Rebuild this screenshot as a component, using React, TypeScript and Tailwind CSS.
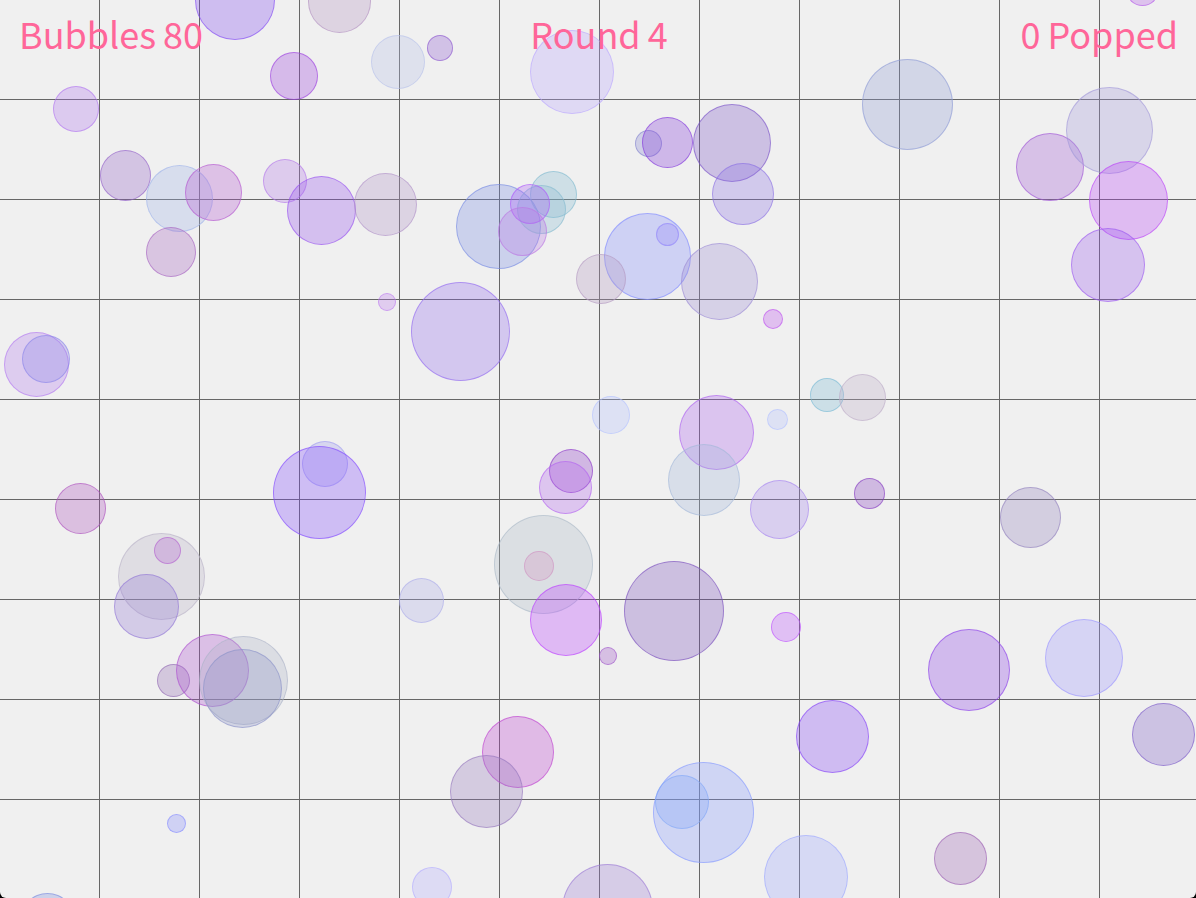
// Bubble field: [centre x, centre y, radius, on-screen tint r, g, b]
type Bubble = [number, number, number, number, number, number];

const BUBBLES: Bubble[] = [
  [235, 0, 39.5, 207, 190, 241],
  [339.5, 1, 31, 222, 212, 226],
  [398, 62, 26.5, 223, 226, 238],
  [440, 48, 12.5, 210, 194, 230],
  [294, 76, 23.5, 215, 187, 235],
  [572, 72, 41.5, 224, 218, 245],
  [76, 109, 22.5, 221, 203, 240],
  [125.5, 175, 25, 212, 197, 228],
  [179.5, 198, 33, 216, 222, 238],
  [213.5, 192, 28, 222, 194, 230],
  [284.5, 181, 21.5, 222, 204, 238],
  [321.5, 210, 34, 213, 192, 240],
  [385.5, 204, 31, 221, 212, 228],
  [498.5, 226, 42, 204, 210, 236],
  [553.5, 194, 23, 207, 224, 230],
  [541, 209, 24, 208, 224, 230],
  [530, 204, 19.5, 220, 195, 243],
  [522, 231, 24, 224, 204, 236],
  [171, 252, 24.5, 218, 198, 226],
  [648.5, 143, 13, 208, 208, 230],
  [667.5, 142, 25, 207, 184, 234],
  [732, 143, 38.5, 205, 193, 228],
  [743, 194, 30.5, 210, 202, 236],
  [907, 104, 45, 211, 215, 232],
  [1050, 167, 33.5, 216, 194, 232],
  [1109, 130, 43, 217, 214, 233],
  [1128.5, 200, 39, 224, 188, 242],
  [1108, 265, 36.5, 215, 195, 240],
  [1142, -11, 16, 222, 195, 238],
  [647, 256, 43, 207, 210, 245],
  [667.5, 234, 11, 212, 208, 243],
  [601, 279, 24.5, 222, 214, 226],
  [719.5, 281, 38, 215, 210, 232],
  [772.5, 319, 9.5, 225, 192, 240],
  [387, 302, 8.5, 225, 205, 240],
  [460, 331, 49, 212, 200, 240],
  [36, 364, 32, 222, 205, 240],
  [45.5, 359, 23.5, 210, 208, 238],
  [611, 415, 18.5, 222, 226, 245],
  [716.5, 432, 37, 220, 197, 240],
  [777, 419, 10, 222, 226, 245],
  [826.5, 395, 16.5, 205, 224, 232],
  [862, 397, 23, 225, 220, 228],
  [325, 464, 22.5, 216, 215, 240],
  [319, 492, 46, 207, 190, 245],
  [570.5, 471, 21.5, 210, 184, 228],
  [565, 487, 26, 222, 198, 240],
  [704, 480, 35.5, 217, 223, 233],
  [779.5, 509, 29, 218, 208, 240],
  [869.5, 493, 15, 208, 186, 226],
  [80, 508, 25, 220, 192, 225],
  [1030.5, 517, 30, 212, 207, 225],
  [161, 576, 43, 224, 222, 228],
  [167.5, 550, 13, 222, 198, 230],
  [146.5, 606, 32, 212, 204, 232],
  [543.5, 564, 49, 220, 224, 228],
  [539, 566, 14.5, 230, 212, 226],
  [566, 620, 35.5, 224, 186, 247],
  [421.5, 600, 22, 220, 220, 238],
  [674, 611, 49.5, 205, 192, 225],
  [785.5, 627, 14.5, 225, 192, 245],
  [608, 656, 8.5, 215, 192, 228],
  [969, 670, 40.5, 210, 187, 238],
  [1084, 658, 38.5, 215, 213, 245],
  [173.5, 680, 16, 212, 200, 222],
  [212.5, 670, 36, 220, 192, 230],
  [243, 680.5, 44, 220, 222, 228],
  [242.5, 688, 39, 210, 212, 228],
  [1163.5, 734, 31, 205, 195, 228],
  [518, 752, 35.5, 225, 187, 230],
  [486.5, 791, 36, 213, 204, 225],
  [832.5, 736, 36, 208, 188, 242],
  [703.5, 812, 50, 208, 214, 245],
  [682, 802, 26.5, 207, 218, 242],
  [176.5, 823, 9, 208, 210, 245],
  [432, 887, 19.5, 222, 220, 245],
  [607.5, 909, 45, 215, 205, 232],
  [806, 877, 41.5, 215, 218, 245],
  [960.5, 858, 26, 215, 197, 222],
  [47, 920, 27, 205, 210, 235],
];

// tint on the #f0f0f0 page back to the source colour at 30% alpha
const base = (v: number) => Math.max(0, Math.round((v - 240 * 0.7) / 0.3));

function BubbleDot({ b }: { b: Bubble }) {
  const [x, y, r, red, green, blue] = b;
  const rgb = `${base(red)}, ${base(green)}, ${base(blue)}`;
  const size = r * 2 + 1;
  return (
    <div
      className="absolute rounded-full border"
      style={{
        left: x - r - 0.5,
        top: y - r - 0.5,
        width: size,
        height: size,
        backgroundColor: `rgba(${rgb}, 0.3)`,
        borderColor: `rgba(${rgb}, 0.6)`,
      }}
    />
  );
}

export default function App() {
  return (
    <div className="h-[898px] w-[1196px] overflow-hidden bg-black">
      <div className="relative h-full w-full overflow-hidden rounded-b-[6px] bg-[#f0f0f0]">
        {/* Grid */}
        <div className="grid w-[1200px] grid-cols-[repeat(12,100px)]">
          {Array.from({ length: 108 }, (_, i) => (
            <div key={i} className="h-[100px] border-r border-b border-[#666666]" />
          ))}
        </div>

        {BUBBLES.map((b, i) => (
          <BubbleDot key={i} b={b} />
        ))}

        {/* Score */}
        <div className="absolute inset-x-0 top-0 grid grid-cols-3 pt-[7px] pr-[18px] pl-[19px] font-['Noto_Sans_CJK_JP',sans-serif] text-[36px] leading-[52px] [word-spacing:-1px] text-[#ff6699]">
          <span>Bubbles 80</span>
          <span className="pl-[1px] text-center">Round 4</span>
          <span className="text-right">0 Popped</span>
        </div>
      </div>
    </div>
  );
}
